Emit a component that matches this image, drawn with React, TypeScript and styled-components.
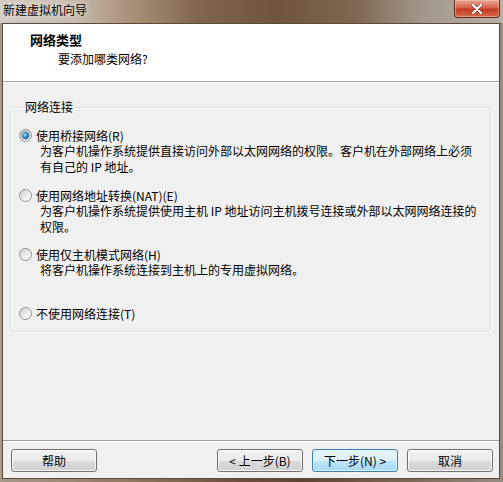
import React from "react";
import styled, { createGlobalStyle, css } from "styled-components";

const GlobalStyle = createGlobalStyle`
  html, body {
    margin: 0;
    padding: 0;
    background: #7d6652;
  }
  body {
    font-family: "Noto Sans CJK SC", "Liberation Sans", sans-serif;
    font-size: 12px;
    color: #000;
  }
`;

const Window = styled.div`
  width: 503px;
  height: 482px;
  display: flex;
  flex-direction: column;
  overflow: hidden;
  background: linear-gradient(
    90deg,
    #a8998a 0%,
    #8f7862 25%,
    #6e5440 45%,
    #5e4533 60%,
    #7a6654 80%,
    #978c80 100%
  );
`;

const TitleBar = styled.div`
  height: 23px;
  display: flex;
  align-items: flex-start;
  justify-content: space-between;
  background: linear-gradient(
    90deg,
    #d2ccc4 0%,
    #c9bdb0 14%,
    #a89079 26%,
    #7f6550 40%,
    #6f5540 55%,
    #7d6550 70%,
    #a3968a 84%,
    #b8b1a9 100%
  );
`;

const Title = styled.div`
  padding: 3px 0 0 3px;
  line-height: 14px;
  color: #000;
  text-shadow: 0 0 6px rgba(255, 255, 255, 0.9);
`;

const CloseButton = styled.div`
  width: 46px;
  height: 18px;
  margin-right: 3px;
  box-sizing: border-box;
  border: 1px solid #5c2c22;
  border-top: none;
  border-radius: 0 0 4px 4px;
  background: linear-gradient(180deg, #e9a898 0%, #d5624a 45%, #c23a22 55%, #d86a4c 100%);
  box-shadow: inset 0 0 0 1px rgba(255, 200, 180, 0.5);
  display: flex;
  align-items: center;
  justify-content: center;
`;

const Client = styled.div`
  flex: 1;
  margin: 0 3px 3px 2px;
  border: 1px solid #5a4a3c;
  background: #f0f0f0;
  display: flex;
  flex-direction: column;
`;

const Header = styled.div`
  height: 57px;
  background: #fff;
  border-bottom: 1px solid #a0a0a0;
  box-shadow: 0 1px 0 #fff;
  display: flex;
  flex-direction: column;
`;

const HeaderTitle = styled.div`
  margin: 8px 0 0 27px;
  line-height: 16px;
  font-weight: bold;
  font-size: 13px;
`;

const HeaderSubtitle = styled.div`
  margin: 3px 0 0 55px;
  line-height: 16px;
`;

const Body = styled.div`
  flex: 1;
  padding-top: 18px;
`;

const Group = styled.fieldset`
  margin: 0 8px 0 7px;
  padding: 13px 0 10px 8px;
  border: 1px solid #d5dfe5;
  border-radius: 3px;
  box-shadow: inset 1px 1px 0 #fff, 1px 1px 0 #fff;
  min-width: 0;
`;

const Legend = styled.legend`
  padding: 0 2px;
  margin-left: 4px;
  line-height: 14px;
`;

const Option = styled.div<{ $gap: number }>`
  margin-top: ${(p) => p.$gap}px;
`;

const RadioRow = styled.div`
  height: 16px;
  display: flex;
  align-items: center;
  gap: 4px;
  white-space: nowrap;
`;

const Radio = styled.span<{ $checked?: boolean }>`
  width: 13px;
  height: 13px;
  box-sizing: border-box;
  border-radius: 50%;
  border: 1px solid #8e8f8f;
  background: linear-gradient(135deg, #d0d0d0 0%, #f4f4f4 70%, #ffffff 100%);
  display: flex;
  align-items: center;
  justify-content: center;
  flex-shrink: 0;
  ${(p) =>
    p.$checked &&
    css`
      &::after {
        content: "";
        width: 7px;
        height: 7px;
        border-radius: 50%;
        background: radial-gradient(circle at 40% 40%, #a6e0f6 0%, #2f87b8 45%, #134a72 100%);
        box-shadow: 0 0 0 1px rgba(30, 80, 120, 0.35);
      }
    `}
`;

const Description = styled.div`
  padding-left: 21px;
  line-height: 16px;
  white-space: nowrap;
`;

const Footer = styled.div`
  border-top: 1px solid #a0a0a0;
  box-shadow: inset 0 1px 0 #fff;
  padding: 8px 6px 6px 8px;
  display: flex;
  align-items: center;
`;

const Spacer = styled.div`
  flex: 1;
`;

const Button = styled.button<{ $default?: boolean }>`
  width: 86px;
  height: 23px;
  font-family: "Noto Sans CJK SC", "Liberation Sans", sans-serif;
  font-size: 12px;
  color: #000;
  border-radius: 3px;
  padding: 0;
  border: 1px solid #707070;
  background: linear-gradient(180deg, #f2f2f2 0%, #ebebeb 50%, #dddddd 51%, #cfcfcf 100%);
  box-shadow: inset 0 0 0 1px rgba(255, 255, 255, 0.8);
  ${(p) =>
    p.$default &&
    css`
      border-color: #3c7fb1;
      background: linear-gradient(180deg, #eaf6fd 0%, #d9f0fc 50%, #bee6fd 51%, #a7d9f5 100%);
      box-shadow: inset 0 0 0 1px rgba(220, 245, 255, 0.9);
    `}
`;

const NavButton = styled(Button)`
  & + & {
    margin-left: 9px;
  }
`;

const options = [
  {
    label: "使用桥接网络(R)",
    checked: true,
    gap: 0,
    lines: [
      "为客户机操作系统提供直接访问外部以太网网络的权限。客户机在外部网络上必须",
      "有自己的 IP 地址。",
    ],
  },
  {
    label: "使用网络地址转换(NAT)(E)",
    gap: 12,
    lines: ["为客户机操作系统提供使用主机 IP 地址访问主机拨号连接或外部以太网网络连接的", "权限。"],
  },
  {
    label: "使用仅主机模式网络(H)",
    gap: 11,
    lines: ["将客户机操作系统连接到主机上的专用虚拟网络。"],
  },
  {
    label: "不使用网络连接(T)",
    gap: 27,
    lines: [] as string[],
  },
];

export default function App() {
  return (
    <>
      <GlobalStyle />
      <Window>
        <TitleBar>
          <Title>新建虚拟机向导</Title>
          <CloseButton>
            <svg width="12" height="10" viewBox="0 0 12 10">
              <path
                d="M2 1 L10 9 M10 1 L2 9"
                stroke="#3a1a12"
                strokeWidth="3.4"
                strokeLinecap="round"
                opacity="0.5"
              />
              <path d="M2 1 L10 9 M10 1 L2 9" stroke="#fff" strokeWidth="2.2" strokeLinecap="round" />
            </svg>
          </CloseButton>
        </TitleBar>
        <Client>
          <Header>
            <HeaderTitle>网络类型</HeaderTitle>
            <HeaderSubtitle>要添加哪类网络?</HeaderSubtitle>
          </Header>
          <Body>
            <Group>
              <Legend>网络连接</Legend>
              {options.map((o) => (
                <Option key={o.label} $gap={o.gap}>
                  <RadioRow>
                    <Radio $checked={o.checked} />
                    {o.label}
                  </RadioRow>
                  {o.lines.map((l) => (
                    <Description key={l}>{l}</Description>
                  ))}
                </Option>
              ))}
            </Group>
          </Body>
          <Footer>
            <Button>帮助</Button>
            <Spacer />
            <NavButton>&lt; 上一步(B)</NavButton>
            <NavButton $default>下一步(N) &gt;</NavButton>
            <NavButton>取消</NavButton>
          </Footer>
        </Client>
      </Window>
    </>
  );
}
